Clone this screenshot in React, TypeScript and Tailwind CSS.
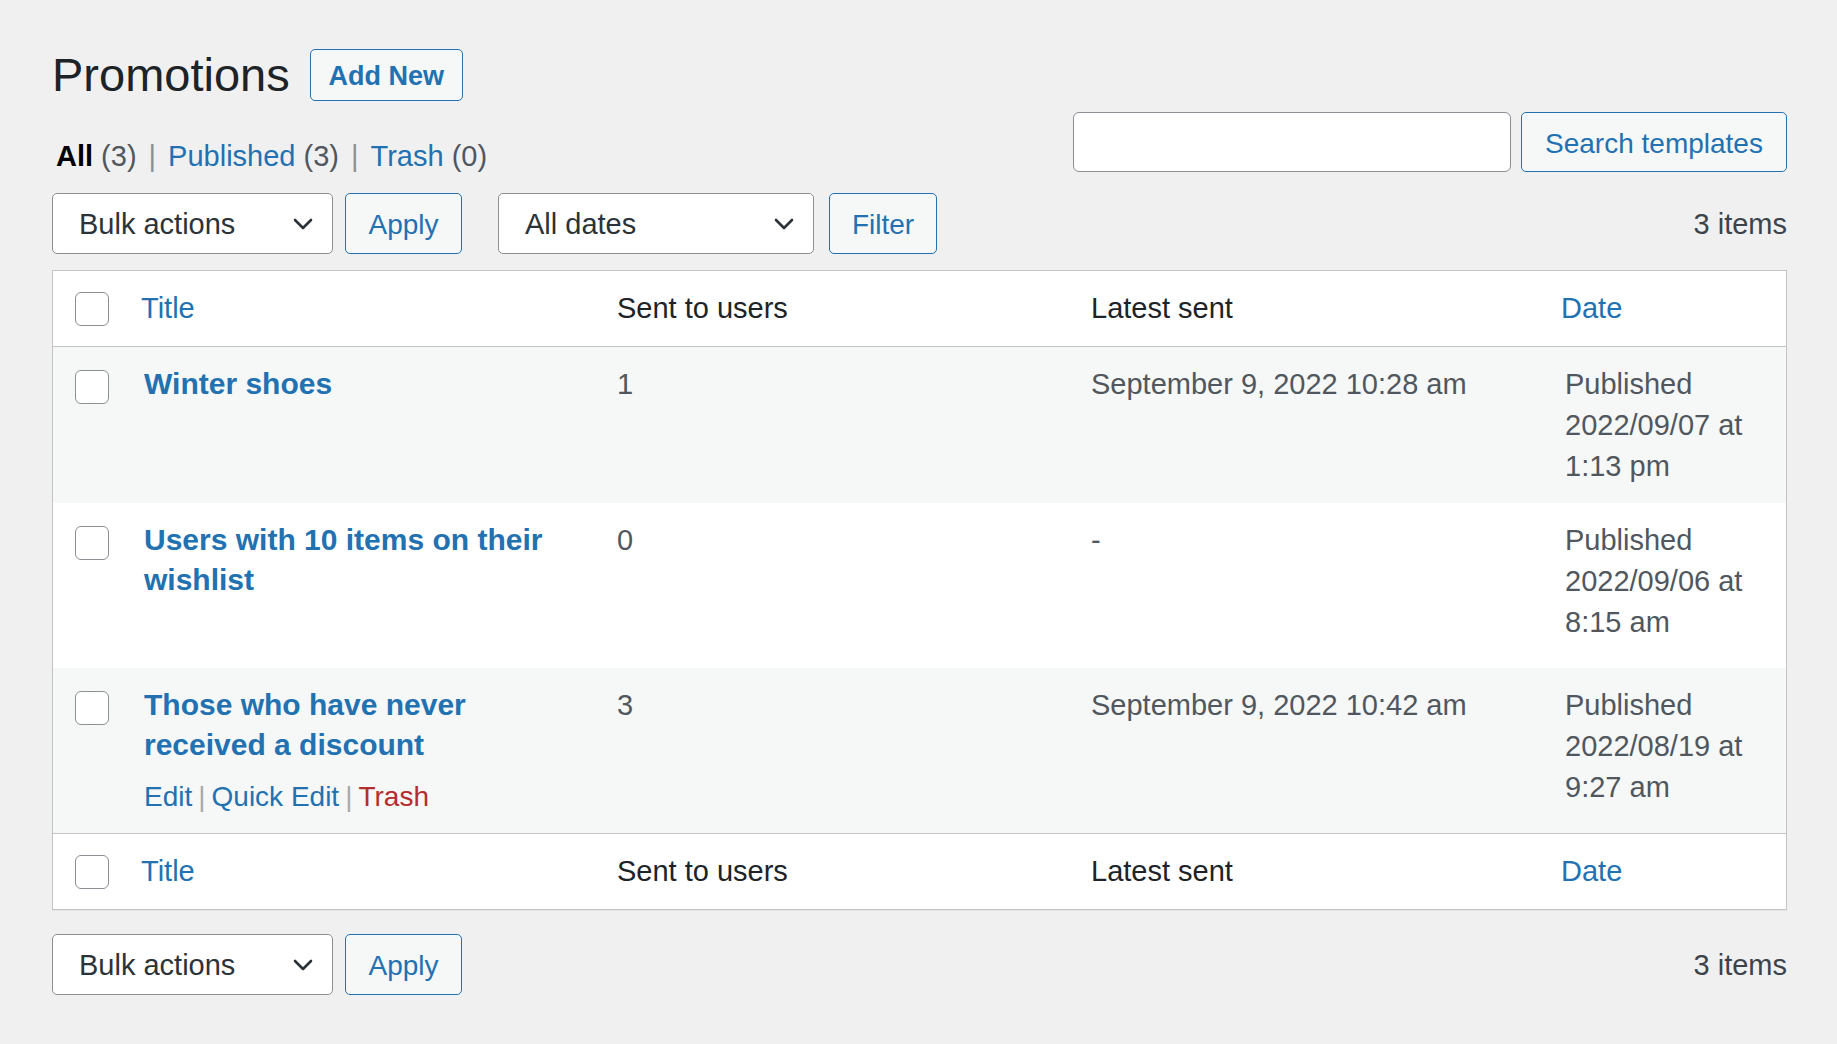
import React from "react";

const Chevron = () => (
    <svg width="24" height="16" viewBox="0 0 24 16" fill="none">
        <path d="M4 4l8 8 8-8" stroke="#2c3338" strokeWidth="2.6" strokeLinecap="round" strokeLinejoin="round" />
    </svg>
);

const Select = ({ label, width }: { label: string; width: string }) => (
    <div className={`flex h-[61px] items-center justify-between rounded-[5px] border border-[#8c8f94] bg-white pl-[26px] pr-[17px] text-[29px] text-[#2c3338] ${width}`}>
        <span className="pt-[2px]">{label}</span>
        <Chevron />
    </div>
);

const Button = ({ label, width }: { label: string; width: string }) => (
    <button className={`flex h-[61px] items-center justify-center rounded-[5px] border border-[#2271b1] bg-[#f6f7f7] pt-[2px] text-[28px] text-[#2271b1] ${width}`}>
        {label}
    </button>
);

const Checkbox = () => <span className="block h-[34px] w-[34px] rounded-[6px] border border-[#8c8f94] bg-white" />;

const cols = "grid grid-cols-[70px_473px_474px_474px_1fr]";

const HeadRow = ({ border }: { border: string }) => (
    <div className={`${cols} h-[76px] items-center bg-white text-[29px] text-[#1d2327] ${border}`}>
        <div className="pl-[22px]">
            <Checkbox />
        </div>
        <div className="pl-[18px] text-[#2271b1]">Title</div>
        <div className="pl-[21px]">Sent to users</div>
        <div className="pl-[21px]">Latest sent</div>
        <div className="pl-[17px] text-[#2271b1]">Date</div>
    </div>
);

type Promo = { title: string; sent: string; latest: string; date: string; time: string };

const promos: Promo[] = [
    { title: "Winter shoes", sent: "1", latest: "September 9, 2022 10:28 am", date: "2022/09/07", time: "1:13 pm" },
    { title: "Users with 10 items on their wishlist", sent: "0", latest: "-", date: "2022/09/06", time: "8:15 am" },
    { title: "Those who have never received a discount", sent: "3", latest: "September 9, 2022 10:42 am", date: "2022/08/19", time: "9:27 am" },
];

const Row = ({ promo, striped, active }: { promo: Promo; striped: boolean; active: boolean }) => (
    <div className={`${cols} pb-[16px] text-[29px] leading-[41px] text-[#50575e] ${striped ? "bg-[#f6f7f7]" : "bg-white"}`}>
        <div className="pl-[22px] pt-[23px]">
            <Checkbox />
        </div>
        <div className="pl-[21px] pr-[21px] pt-[17px]">
            <div className="text-[30px] font-bold leading-[40px] text-[#2271b1]">{promo.title}</div>
            <div className={`mt-[11px] text-[28px] ${active ? "" : "invisible"}`}>
                <span className="text-[#2271b1]">Edit</span>
                <span className="mx-[6px] text-[#a7aaad]">|</span>
                <span className="text-[#2271b1]">Quick Edit</span>
                <span className="mx-[6px] text-[#a7aaad]">|</span>
                <span className="text-[#b32d2e]">Trash</span>
            </div>
        </div>
        <div className="pl-[21px] pt-[17px]">{promo.sent}</div>
        <div className="pl-[21px] pt-[17px]">{promo.latest}</div>
        <div className="pl-[21px] pr-[21px] pt-[17px]">
            Published
            <br />
            {promo.date} at {promo.time}
        </div>
    </div>
);

const App = () => {
    return (
        <div className="min-h-screen bg-[#f0f0f1] pl-[52px] pr-[50px] pt-[49px] font-['Liberation_Sans',Arial,sans-serif] text-[#3c434a]">
            <div className="flex h-[52px] items-center">
                <h1 className="text-[47px] leading-[52px] text-[#1d2327]">Promotions</h1>
                <button className="ml-[20px] flex h-[52px] w-[153px] items-center justify-center rounded-[5px] border border-[#2271b1] bg-[#f6f7f7] pt-[2px] text-[27px] font-bold text-[#2271b1]">
                    Add New
                </button>
            </div>

            <div className="mt-[11px] flex h-[60px] items-start justify-between">
                <div className="mt-[25px] pl-[4px] text-[29px] leading-[38px] text-[#50575e]">
                    <span className="font-bold text-black">All</span> (3)
                    <span className="mx-[12px] text-[#8c8f94]">|</span>
                    <span className="text-[#2271b1]">Published</span> (3)
                    <span className="mx-[12px] text-[#8c8f94]">|</span>
                    <span className="text-[#2271b1]">Trash</span> (0)
                </div>
                <div className="flex">
                    <div className="h-[60px] w-[438px] rounded-[6px] border border-[#8c8f94] bg-white" />
                    <button className="ml-[10px] flex h-[60px] w-[266px] items-center justify-center rounded-[5px] border border-[#2271b1] bg-[#f6f7f7] pt-[3px] text-[28px] text-[#2271b1]">
                        Search templates
                    </button>
                </div>
            </div>

            <div className="mt-[21px] flex items-center">
                <Select label="Bulk actions" width="w-[281px]" />
                <Button label="Apply" width="ml-[12px] w-[117px]" />
                <Select label="All dates" width="ml-[36px] w-[316px]" />
                <Button label="Filter" width="ml-[15px] w-[108px]" />
                <span className="ml-auto pt-[2px] text-[29px] text-[#3c434a]">3 items</span>
            </div>

            <div className="mt-[16px] border border-[#c3c4c7] bg-white shadow-[0_1px_1px_rgba(0,0,0,0.04)]">
                <HeadRow border="border-b border-[#c3c4c7]" />
                {promos.map((p, i) => (
                    <Row key={p.title} promo={p} striped={i !== 1} active={i === 2} />
                ))}
                <HeadRow border="border-t border-[#c3c4c7]" />
            </div>

            <div className="mt-[24px] flex items-center">
                <Select label="Bulk actions" width="w-[281px]" />
                <Button label="Apply" width="ml-[12px] w-[117px]" />
                <span className="ml-auto pt-[2px] text-[29px] text-[#3c434a]">3 items</span>
            </div>
        </div>
    );
};

export default App;
